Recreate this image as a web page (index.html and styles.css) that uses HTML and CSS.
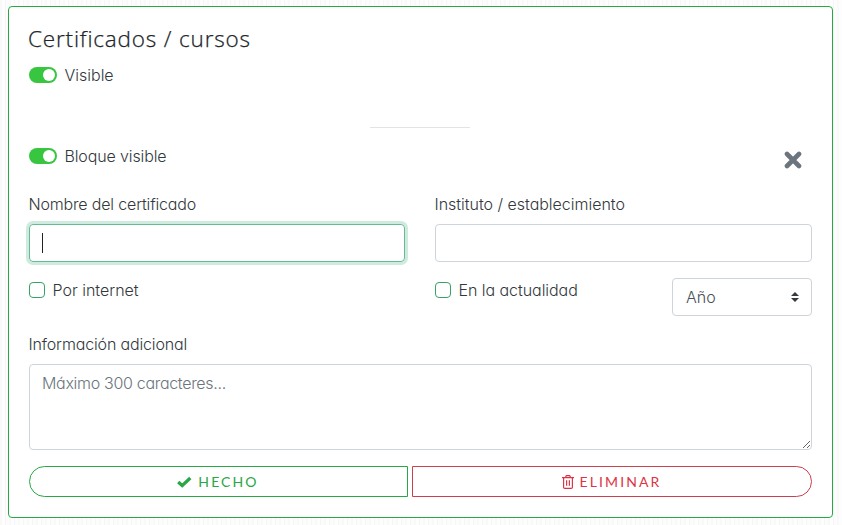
FILE: index.html
```html
<!DOCTYPE html>
<html lang="es">
<head>
<meta charset="utf-8">
<title>Certificados / cursos</title>
<link rel="stylesheet" href="styles.css">
</head>
<body>
<main class="card">
  <h1 class="title">Certificados / cursos</h1>
  <div class="row"><span class="switch"></span><span class="t-visible">Visible</span></div>
  <hr class="divider">
  <div class="row block-row">
    <span class="switch"></span><span class="t-block">Bloque visible</span>
    <svg class="close" width="18" height="18" viewBox="0 0 18 18"><path d="M3 3L15 15M15 3L3 15"/></svg>
  </div>
  <div class="columns">
    <div class="field">
      <div class="label t-name">Nombre del certificado</div>
      <div class="input focused"><span class="caret"></span></div>
    </div>
    <div class="field">
      <div class="label t-inst">Instituto / establecimiento</div>
      <div class="input"></div>
    </div>
  </div>
  <div class="columns options">
    <div class="field check"><span class="box"></span><span class="t-web">Por internet</span></div>
    <div class="field check">
      <span class="box"></span><span class="t-now">En la actualidad</span>
      <div class="select"><span>Año</span>
        <svg width="8" height="10" viewBox="0 0 8 10"><path d="M0 4L4 0L8 4ZM0 6L4 10L8 6Z"/></svg>
      </div>
    </div>
  </div>
  <div class="label t-info">Información adicional</div>
  <textarea class="area" placeholder="Máximo 300 caracteres..."></textarea>
  <div class="actions">
    <div class="btn done">
      <svg width="15" height="12" viewBox="0 0 15 12"><path d="M1.2 6L5.2 9.6L13.3 2" fill="none" stroke="currentColor" stroke-width="3.3"/></svg>
      <span>HECHO</span>
    </div>
    <div class="btn remove">
      <svg width="12" height="14" viewBox="0 0 12 14" fill="none" stroke="currentColor" stroke-width="1.2"><path d="M0 2.6H12M3.5 2.5L4.3 .6H7.7L8.5 2.5M1.6 2.6V12.2Q1.6 13.4 2.8 13.4H9.2Q10.4 13.4 10.4 12.2V2.6M4.6 5.2V10.8M7.4 5.2V10.8"/></svg>
      <span>ELIMINAR</span>
    </div>
  </div>
</main>
</body>
</html>
```
FILE: styles.css
```css
* { box-sizing: border-box; }
body {
  margin: 0;
  padding: 6px 9px 7px 8px;
  background: repeating-linear-gradient(90deg, #faf9f9 0 2px, #fdfdfd 2px 5px, #f7f6f6 5px 6px, #fcfcfc 6px 9px);
  font: 16px/24px Inter, "Liberation Sans", sans-serif;
  font-weight: 300;
  font-feature-settings: "cv11";
  color: #33383d;
}
.card {
  height: 512px;
  padding: 17px 20px 20px;
  border: 1px solid #28a745;
  border-radius: 4px;
  background: #fff;
}
.title {
  margin: 0 0 0 -1px;
  height: 39px;
  font: 300 22.5px/29px "Open Sans", sans-serif;
  letter-spacing: 0.83px;
  -webkit-text-stroke: 0.25px #212529;
  color: #212529;
}
.row { display: flex; align-items: center; height: 24px; }
.switch {
  width: 28px;
  height: 16px;
  margin-right: 7.5px;
  padding: 2px;
  border-radius: 8px;
  background: #38c640;
}
.switch::after {
  content: "";
  display: block;
  width: 12px;
  height: 12px;
  margin-left: 12px;
  border-radius: 50%;
  background: #fff;
}
.divider {
  width: 100px;
  height: 1px;
  margin: 40px 342px 16px 341px;
  border: 0;
  background: #e3e3e3;
}
.block-row { margin-bottom: 24px; }
.close { margin: 8px 10px 0 auto; }
.close path { stroke: #6c757d; stroke-width: 4.6; stroke-linecap: round; }
.t-block { letter-spacing: -0.13px; }
.t-name { letter-spacing: -0.17px; }
.t-inst { letter-spacing: -0.02px; }
.t-now { letter-spacing: -0.05px; }
.t-info { letter-spacing: -0.15px; }
.columns { display: grid; grid-template-columns: 376px 377px; gap: 30px; }
.label { height: 24px; margin-bottom: 8px; text-indent: -0.5px; white-space: nowrap; }
.input {
  height: 38px;
  padding: 8px 12px;
  border: 1px solid #ced4da;
  border-radius: 4px;
}
.focused { border-color: #69b896; box-shadow: 0 0 0 3px #cfebdf; }
.caret { display: block; width: 1px; height: 20px; background: #222; }
.options { margin: 16px 0; height: 38px; }
.check { display: flex; align-items: flex-start; white-space: nowrap; }
.box {
  width: 16px;
  height: 16px;
  margin: 4px 7.5px 0 0;
  border: 1px solid #36a266;
  border-radius: 4px;
}
.select {
  display: flex;
  align-items: center;
  justify-content: space-between;
  width: 140px;
  height: 38px;
  margin-left: auto;
  padding: 0 12px 0 13px;
  border: 1px solid #ced4da;
  border-radius: 4px;
  color: #495057;
}
.select svg { fill: #343a40; }
.area {
  display: block;
  width: 100%;
  height: 86px;
  padding: 6px 12px;
  border: 1px solid #ced4da;
  border-radius: 4px;
  font: inherit;
  font-feature-settings: inherit;
  letter-spacing: -0.31px;
}
.area::placeholder { color: #6c757d; }
.actions { display: grid; grid-template-columns: 379px 1fr; gap: 4px; margin-top: 16px; }
.btn {
  display: flex;
  align-items: center;
  justify-content: center;
  gap: 6px;
  height: 31px;
  border: 1px solid;
  font: 14px/21px Lato, sans-serif;
  letter-spacing: 2.1px;
}
.done { color: #28a745; border-radius: 16px 0 0 16px; }
.remove { color: #dc3545; border-color: #c9404e; border-radius: 0 16px 16px 0; }
.btn svg { margin-left: -1px; }
```
